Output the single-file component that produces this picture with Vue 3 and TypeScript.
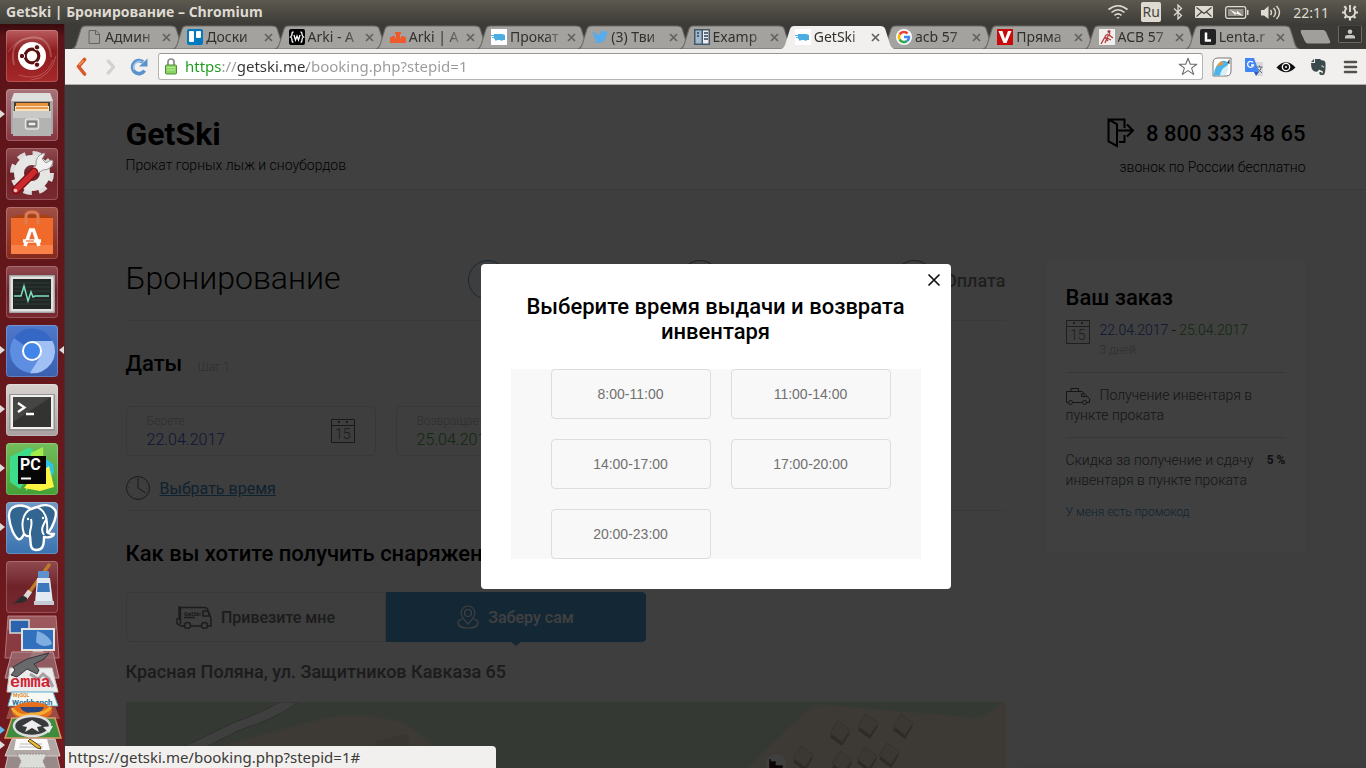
<script setup lang="ts">
import { ref } from 'vue'

interface Tab {
  icon: string
  title: string
}

const tabs: Tab[] = [
  { icon: 'file', title: 'Админ' },
  { icon: 'trello', title: 'Доски' },
  { icon: 'w', title: 'Arki - А' },
  { icon: 'blocks', title: 'Arki | А' },
  { icon: 'van', title: 'Прокат' },
  { icon: 'bird', title: '(3) Тви' },
  { icon: 'book', title: 'Examp' },
  { icon: 'van', title: 'GetSki' },
  { icon: 'google', title: 'acb 57' },
  { icon: 'v', title: 'Пряма' },
  { icon: 'ski', title: 'АСВ 57' },
  { icon: 'lenta', title: 'Lenta.r' },
]
const activeTab = ref(7)

interface LauncherItem {
  id: string
  label: string
  running?: boolean
  focused?: boolean
}

const launcher: LauncherItem[] = [
  { id: 'dash', label: 'Dash' },
  { id: 'files', label: 'Files', running: true },
  { id: 'settings', label: 'Settings' },
  { id: 'store', label: 'Software' },
  { id: 'monitor', label: 'Monitor' },
  { id: 'chromium', label: 'Chromium', running: true, focused: true },
  { id: 'terminal', label: 'Terminal', running: true },
  { id: 'pycharm', label: 'PyCharm', running: true },
  { id: 'pgadmin', label: 'pgAdmin', running: true },
  { id: 'paint', label: 'Paint' },
]

const url = ref('https://getski.me/booking.php?stepid=1')
const pickup = ref('22.04.2017')
const giveBack = ref('25.04.2017')
const slots: string[] = ['8:00-11:00', '11:00-14:00', '14:00-17:00', '17:00-20:00', '20:00-23:00']
const modalOpen = ref(true)

const houses: [number, number][] = [
  [715, 31], [743, 24], [778, 24], [678, 56], [717, 61], [742, 57], [764, 53],
]
</script>

<template>
  <div class="desktop">
    <header class="panel">
      <span class="panel-title">GetSki | Бронирование – Chromium</span>
      <div class="tray">
        <svg width="22" height="16" viewBox="0 0 22 16" fill="none" stroke="#dfdbd2" stroke-width="1.6">
          <path d="M1.5 5.5Q11-2 20.500 5.500M4.500 8.500Q11 3 17.500 8.500M7.500 11.300Q11 8.500 14.500 11.300" />
          <path d="M9.300 13.200h3.400L11 15z" fill="#dfdbd2" stroke="none" />
        </svg>
        <span class="lang">Ru</span>
        <svg width="10" height="16" viewBox="0 0 10 16" fill="none" stroke="#dfdbd2" stroke-width="1.3">
          <path d="M1 4.500l7.500 7L5 15V1l3.500 3.500L1 11.500" />
        </svg>
        <svg width="18" height="12" viewBox="0 0 18 12">
          <rect width="18" height="12" rx="1" fill="#dfdbd2" />
          <path d="M1.500 1.500L9 7.500l7.500-6M1.500 10.500L6.500 6M16.500 10.500L11.500 6" fill="none" stroke="#46443e" stroke-width="1.100" />
        </svg>
        <svg width="24" height="13" viewBox="0 0 24 13">
          <rect x=".7" y=".7" width="20" height="11.600" rx="2" fill="none" stroke="#dfdbd2" stroke-width="1.300" />
          <rect x="3" y="3" width="15.500" height="7" fill="#96938b" />
          <path d="M22 4v5h1.500V4z" fill="#dfdbd2" />
          <path d="M5 3.500l7 3.500V4.500l6 5.500-7.500-2.500v2z" fill="#f5f3ee" />
        </svg>
        <svg width="20" height="15" viewBox="0 0 20 15">
          <path d="M0 5h3l4.500-4v13L3 10.500H0z" fill="#dfdbd2" />
          <path d="M9.500 5q2 2.500 0 5M12.500 3q4 4.500 0 9M15.500 1q6 6.500 0 13" fill="none" stroke="#dfdbd2" stroke-width="1.400" />
        </svg>
        <span class="clock">22:11</span>
        <svg width="18" height="18" viewBox="0 0 18 18" fill="none" stroke="#dfdbd2" stroke-width="1.900">
          <path d="M5.800 5A5.200 5.200 0 1 0 12.200 5M9 2v7" />
          <path d="M3.300 3.300l1.800 1.800M14.700 3.300l-1.800 1.800M1 9.500h2.500M17 9.500h-2.500M3.500 15l1.800-1.800M14.500 15l-1.800-1.800M9 17.500V15" stroke-width="2.200" />
        </svg>
      </div>
    </header>

    <nav class="launcher">
      <div v-for="item in launcher" :key="item.id" class="slot" :class="{ running: item.running, focused: item.focused }">
        <button class="tile" :class="item.id" type="button" :aria-label="item.label">
          <svg v-if="item.id === 'dash'" viewBox="0 0 52 52">
            <g fill="none" stroke="#e8b8b8" stroke-opacity=".3" stroke-width="2">
              <path d="M8 35Q2 8 29 7q15 2 16 20" />
              <path d="M2 22Q14 4 36 9M13 45q25 8 34-15M25 50q20-2 25-24" stroke-width="1" />
            </g>
            <circle cx="26" cy="26" r="14" fill="#fff" />
            <circle cx="26" cy="26" r="6.800" fill="none" stroke="#5c1010" stroke-width="3.200" />
            <g fill="#5c1010" stroke="#fff" stroke-width="1">
              <circle cx="16" cy="26" r="2.700" /><circle cx="31" cy="17.300" r="2.700" /><circle cx="31" cy="34.700" r="2.700" />
            </g>
          </svg>
          <svg v-else-if="item.id === 'files'" viewBox="0 0 52 52">
            <path d="M8 4h36l3 8v33H5V12z" fill="#a9a9a7" />
            <path d="M8 4h36l3 8H5z" fill="#dededc" />
            <rect x="8" y="13" width="36" height="12" fill="#4b3d33" />
            <rect x="10" y="14" width="32" height="8" fill="#e8943c" />
            <rect x="9" y="17" width="34" height="7" fill="#f7e0b8" />
            <path d="M10 19h32" stroke="#e0852c" stroke-width="1.500" />
            <path d="M7 22h38v25H7z" fill="#b3b3b1" />
            <path d="M7 22h38v7H7z" fill="#c8c8c6" />
            <rect x="19.500" y="30" width="13" height="10" rx="2" fill="#a2a2a0" stroke="#e4e4e2" stroke-width="1.500" />
            <rect x="22" y="33" width="8" height="4" fill="#eee" stroke="#555" />
          </svg>
          <svg v-else-if="item.id === 'settings'" viewBox="0 0 52 52">
            <circle cx="26" cy="25" r="19" fill="none" stroke="#dcdcda" stroke-width="6" stroke-dasharray="8 6.920" />
            <circle cx="26" cy="25" r="13" fill="none" stroke="#e6e6e4" stroke-width="10" />
            <path d="M17 34L34 17" stroke="#fafafa" stroke-width="6" />
            <path d="M30 17q-1-9 8-12l1 1-3 5 4 4 5-3 2 1q-1 9-10 9l-5 3-4-4z" fill="#f1f1f0" stroke="#999" />
            <path d="M10 42L28 24" stroke="#7f0f12" stroke-width="8.500" stroke-linecap="round" />
            <path d="M10 42L28 24" stroke="#ca2a2d" stroke-width="6" stroke-linecap="round" />
            <circle cx="9.500" cy="42.500" r="1.800" fill="#f2c1bd" />
          </svg>
          <svg v-else-if="item.id === 'store'" viewBox="0 0 52 52">
            <path d="M5 11l5-3h32l5 3z" fill="#a84216" />
            <rect x="5" y="11" width="42" height="36" fill="#f06a2c" />
            <rect x="5" y="38" width="42" height="9" fill="#f88148" />
            <path d="M20 17V9q0-4 6-4t6 4v8" fill="none" stroke="#df7b50" stroke-width="3" />
            <path d="M19 39l5.500-16h3L33 39" fill="none" stroke="#fff" stroke-width="3.500" />
            <path d="M17 34h18" stroke="#fff" stroke-width="3.500" /><path d="M20 34h8" stroke="#f06a2c" stroke-width="1.200" />
          </svg>
          <svg v-else-if="item.id === 'monitor'" viewBox="0 0 52 52">
            <rect x="3" y="9" width="46" height="38" rx="1" fill="#a3a5a2" /><rect x="4.500" y="10.500" width="43" height="35" fill="#e2e3e1" />
            <rect x="7" y="13" width="38" height="30" fill="#202725" />
            <path d="M8 17h36M8 21h36M8 25h36M8 34h36M8 38h36" stroke="#38413e" stroke-width=".8" />
            <path d="M8 30h7l3-10 4 15 3-9 2 5 2-1h14" fill="none" stroke="#7de0bd" stroke-width="1.500" />
          </svg>
          <svg v-else-if="item.id === 'chromium'" viewBox="0 0 52 52">
            <circle cx="26" cy="26" r="22" fill="#5e8ee2" />
            <path d="M26 26L8 13A22 22 0 0 1 46 16z" fill="#3568c4" />
            <path d="M26 16h20.500A22 22 0 0 1 24 48l10-16z" fill="#a1c0f4" />
            <circle cx="26" cy="26" r="10" fill="#fff" /><circle cx="26" cy="26" r="8" fill="#4285e8" />
          </svg>
          <svg v-else-if="item.id === 'terminal'" viewBox="0 0 52 52">
            <rect x="3" y="10" width="46" height="37" rx="1" fill="#949492" /><rect x="4.500" y="11" width="43" height="34" fill="#efefed" />
            <rect x="7" y="13" width="38" height="30" fill="#333331" />
            <path d="M7 13h38L7 38z" fill="#454543" />
            <path d="M12 19l6.500 4.500L12 28M20 30h8" fill="none" stroke="#fff" stroke-width="2.300" />
          </svg>
          <svg v-else-if="item.id === 'pycharm'" viewBox="0 0 52 52">
            <path d="M4 14L24 4l10 12-20 30L4 39z" fill="#3ddc8a" />
            <path d="M37 4l-12 6-5 38 18-20z" fill="#a4ea48" />
            <path d="M38 15l9 6 1 8-7 14z" fill="#2cc4e8" />
            <path d="M18 45l8-10 17-12 5 21-14 4z" fill="#fbf542" />
            <rect x="12" y="13" width="28" height="28" fill="#060606" />
            <text x="14" y="27" fill="#fff" font-family="Roboto, sans-serif" font-weight="700" font-size="16">PC</text>
            <path d="M15 35.500h10" stroke="#fff" stroke-width="2" />
          </svg>
          <svg v-else-if="item.id === 'pgadmin'" viewBox="0 0 52 52">
            <path d="M25 7C14 0 2 4 3 15c1 10 5 19 9 22 3 2 6-5 6-5s3 3 6 2c1 5-1 14 6 14 6 0 8-3 8-13 4 1 9 0 10-3-3 0-5 0-6-1 5-6 10-19 7-23C44 1 35 3 31 5z" fill="#326690" stroke="#fff" stroke-width="2.400" stroke-linejoin="round" />
            <path d="M25 7c-9 4-10 16-7 25M31 5c10 4 11 15 10 26M24 34c-1-7 3-9 1-17M38 33c-4-5-1-10 3-17" fill="none" stroke="#fff" stroke-width="2" />
            <circle cx="22" cy="17" r="1.200" fill="#fff" /><circle cx="37" cy="16" r="1.200" fill="#fff" />
          </svg>
          <svg v-else viewBox="0 0 52 52">
            <path d="M43 4L22 33" stroke="#c07a28" stroke-width="3.500" stroke-linecap="round" />
            <path d="M24 30l-5 7" stroke="#d9d9d9" stroke-width="5" />
            <path d="M4 42q7 0 9-5 4-4 8 0 1 6-17 5z" fill="#2c2c2c" />
            <rect x="32" y="10" width="11" height="7" rx="1" fill="#5e92cf" />
            <path d="M31 17h13l3 25H29z" fill="#e3e9f0" />
            <path d="M32 22h11l1 9H31z" fill="#3d78bf" />
            <rect x="28" y="40" width="20" height="4" fill="#c6ccd4" />
          </svg>
        </button>
      </div>
      <svg class="stack" width="65" height="155" viewBox="0 0 65 155">
        <path d="M8 2h48l3 42H5z" fill="#8a3b41" stroke="#b07478" stroke-width="1" />
        <path d="M8 2h48l1 14H7z" fill="#fff" fill-opacity=".15" />
        <rect x="10" y="6" width="19" height="13" fill="#2b63ae" stroke="#d6d8d4" stroke-width="1.500" />
        <rect x="22" y="15" width="32" height="21" fill="#3170bd" stroke="#e3e4e0" stroke-width="2" />
        <path d="M37 17c8 2 14 8 15 13q-9 5-16-2z" fill="#7faee0" />
        <path d="M33 37h10l3 6H30z" fill="#d0d2ce" />
        <path d="M12 38h41l6 26H5z" fill="#98696d" fill-opacity=".85" stroke="#bd9194" />
        <path d="M10 54h42l6 24H7z" fill="#ececec" stroke="#c9c9c9" />
        <path d="M13 53l14-8 22-6-5 6-10 5 5 6-2 4-10-5-10 8-6-2 4-5z" fill="#68696b" stroke="#34353a" />
        <path d="M30 60l8 5 5-5 6 5 4 8" fill="none" stroke="#a3a3a3" stroke-width="3" />
        <text x="10" y="73" fill="#cf2233" font-family="Liberation Mono, monospace" font-weight="700" font-size="17">emma</text>
        <path d="M12 78h41l5 14H8z" fill="#f7f7f4" stroke="#63b6da" />
        <text x="13" y="83" fill="#dd8b2b" font-family="Roboto, sans-serif" font-weight="700" font-size="5">MySQL</text>
        <text x="12" y="91" fill="#186f9b" font-family="Roboto, sans-serif" font-weight="700" font-size="8">Workbench</text>
        <path d="M10 92h45l5 13H6z" fill="#9a4c42" />
        <ellipse cx="32" cy="97" rx="20" ry="9" fill="#e56f1d" />
        <path d="M20 93h24q-2 6-12 6-9 0-12-6z" fill="#284780" />
        <path d="M12 94q7 11 19 6 14 1 20-7" fill="none" stroke="#f5ad31" stroke-width="3" />
        <path d="M12 104h43l6 20H5z" fill="#3b8c3e" stroke="#e29b62" stroke-width="1.500" />
        <ellipse cx="32" cy="112" rx="18" ry="10" fill="#383b3b" stroke="#ddd" stroke-width="2.500" />
        <path d="M22 112l10-6 10 6-5 1 2 5-7-4-7 4 2-5zM43 113l10-1-4 7z" fill="#eee" />
        <path d="M12 125h43l5 17H5z" fill="#b1a8a6" stroke="#d5cdca" />
        <path d="M16 125h31l3 11H14z" fill="#fafafa" />
        <path d="M20 130h22M19 133h24" stroke="#bbb" />
        <path d="M30 125l10 7 1 3-4-1-9-7z" fill="#e7b934" stroke="#5c4a20" />
        <path d="M8 142h49l3 13H5z" fill="#988a88" stroke="#cbbfbc" />
        <path d="M17 140h30l-4 7 3 7H18l3-7z" fill="#dcdcd9" stroke="#8f8f8d" stroke-dasharray="2 1" />
        <path d="M0 112l5 4-5 4z" fill="#5cb8e6" /><path d="M0 127l5 4-5 4z" fill="#ddd" />
      </svg>
    </nav>

    <main class="browser">
      <div class="tabstrip">
        <div v-for="(tab, i) in tabs" :key="i" class="tab" :class="{ active: i === activeTab }">
          <svg class="tab-shape" viewBox="0 0 113 24" preserveAspectRatio="none">
            <path d="M0 24Q3 23 4 20L9 4Q10 1 13 1H99Q103 1 104 4L109 20Q110 23 113 24z" />
          </svg>
          <button class="tab-main" type="button" @click="activeTab = i">
            <svg width="16" height="16" viewBox="0 0 16 16">
              <path v-if="tab.icon === 'file'" d="M3 1.500h7l3.500 3.500v9.500H3zM9.500 1.500V5.500h4" fill="none" stroke="#66635f" />
              <g v-else-if="tab.icon === 'trello'">
                <rect width="16" height="16" rx="2" fill="#0079bf" /><rect x="2" y="2" width="5" height="11" rx="1" fill="#fff" /><rect x="9" y="2" width="5" height="7" rx="1" fill="#fff" />
              </g>
              <g v-else-if="tab.icon === 'w'">
                <rect width="16" height="16" rx="2" fill="#000" />
                <path d="M4.500 3Q3 3 3 5t-1.500 3Q3 8.500 3 11t1.500 2M11.500 3Q13 3 13 5t1.500 3Q13 8.500 13 11t-1.500 2M5 6l1.500 5L8 7l1.500 4L11 6" fill="none" stroke="#fff" stroke-width="1.300" />
              </g>
              <path v-else-if="tab.icon === 'blocks'" d="M0 14V8h2V7h3v2h1V5H5V3h6v2h-1v4h1V7h3v1h2v6z" fill="#ed5b2d" />
              <g v-else-if="tab.icon === 'van'">
                <rect width="16" height="16" fill="#fff" />
                <path d="M3 5h8l3 1v5h-2l-1 1-2-1H6l-1 1-1-1-1-2H1V8h2V7H0V6h3z" fill="#4aace0" />
              </g>
              <path v-else-if="tab.icon === 'bird'" d="M1 2q3 4 7 3.700Q8 1 12 2l1.500.700L15.500 2l-1 2 1.500-.3-1.500 1.800C14 12 9 15.500 1 13.500q3 0 4.500-1.500-2.500-.5-3-2.500H4Q1 8 1 5.500l1.500.5Q0 4 1 2z" fill="#55acee" />
              <g v-else-if="tab.icon === 'book'">
                <rect width="16" height="16" fill="#43586c" /><rect x="1.500" y="1.500" width="6" height="13" fill="#a2b9cc" /><rect x="9" y="1.500" width="5.500" height="13" fill="#eee" />
                <path d="M10 4h4M10 7h4M10 10h4M3 4h2M3 7h2" stroke="#2f4254" stroke-width="1.500" />
              </g>
              <g v-else-if="tab.icon === 'google'" fill="none" stroke-width="2.600">
                <circle cx="8" cy="8" r="8" fill="#fff" stroke="none" />
                <path d="M3.600 5.500A5 5 0 0 1 11.500 4.500" stroke="#ea4335" /><path d="M3.600 5.500a5 5 0 0 0 0 5" stroke="#fbbc05" />
                <path d="M3.600 10.500a5 5 0 0 0 7.500 1.500" stroke="#34a853" /><path d="M11.100 12A5 5 0 0 0 13 8H8" stroke="#4285f4" />
              </g>
              <g v-else-if="tab.icon === 'v'">
                <rect width="16" height="16" fill="#c80a0a" /><path d="M1.500 2h4l2.500 8 3-8h3.500L9.500 14h-3z" fill="#fff" />
              </g>
              <g v-else-if="tab.icon === 'ski'">
                <rect width="16" height="16" fill="#f1eeee" />
                <circle cx="10" cy="2.500" r="1.500" fill="#a83a3c" /><path d="M11 4L8 9l4 2M10 6l4 3M8 9l-2 5M9 5L6 7M2 15l4-7 3 4" fill="none" stroke="#b3393b" stroke-width="1.300" />
              </g>
              <g v-else>
                <rect width="16" height="16" rx="2" fill="#222" /><path d="M6 3.500v8h5" fill="none" stroke="#fff" stroke-width="2.500" />
              </g>
            </svg>
            <span class="tab-title">{{ tab.title }}</span>
          </button>
          <button class="tab-close" type="button" aria-label="Закрыть вкладку">
            <svg width="9" height="9" viewBox="0 0 9 9"><path d="M1 1l7 7M8 1L1 8" stroke="#66605c" stroke-width="1.700" /></svg>
          </button>
        </div>
        <button class="new-tab" type="button" aria-label="Новая вкладка">
          <svg width="32" height="16" viewBox="0 0 32 16"><path d="M3 1h21q2 0 3 2l4 9q1 2.500-2 2.500H9q-2 0-3-2L2 4Q1 1 3 1z" fill="#a09f9c" /></svg>
        </button>
        <button class="profile" type="button" aria-label="Профиль">
          <svg width="10" height="10" viewBox="0 0 10 10" fill="#c8c6c1"><circle cx="5" cy="2.700" r="2.300" /><path d="M0 9.500V8q0-2 3-2h4q3 0 3 2v1.500z" /></svg>
        </button>
      </div>

      <div class="toolbar">
        <button type="button" aria-label="Назад"><svg width="16" height="20" viewBox="0 0 16 20"><path d="M11.500 2.500L5.500 9.500l6 7.500" fill="none" stroke="#d9592a" stroke-width="3.600" stroke-linejoin="round" stroke-linecap="round" /><path d="M10.500 3.500L6 8" stroke="#f09b58" stroke-width="1.500" /></svg></button>
        <button type="button" aria-label="Вперёд"><svg width="22" height="20" viewBox="0 0 22 20"><path d="M9.500 3l6 7-6 7" fill="none" stroke="#d3d1ce" stroke-width="3.400" stroke-linejoin="round" /></svg></button>
        <button type="button" aria-label="Обновить"><svg width="20" height="20" viewBox="0 0 20 20"><path d="M15.500 13.500A6.500 6.500 0 1 1 14 5" fill="none" stroke="#5b92cb" stroke-width="3.600" /><path d="M18.500 1.500v8H10z" fill="#5b92cb" /><path d="M5 13A6.500 6.500 0 0 1 13 4.500" fill="none" stroke="#a5c9ea" stroke-width="1.300" /></svg></button>
        <div class="omnibox">
          <svg width="12" height="17" viewBox="0 0 12 17">
            <path d="M3 8V4q0-3 3-3t3 3v4" fill="none" stroke="#8a8a8a" stroke-width="1.700" />
            <rect x=".5" y="7" width="11" height="9" rx="1" fill="#8cd464" stroke="#4e8c36" />
            <path d="M2 9.500h8M2 12h8" stroke="#b6ec95" />
          </svg>
          <input v-model="url" class="url" type="text" aria-label="Адрес" />
          <svg width="20" height="19" viewBox="0 0 20 19"><path d="M10 1.200l2.300 6h6.400l-5.100 3.900 2 6.300L10 13.600l-5.600 3.800 2-6.300L1.300 7.200h6.400z" fill="#fff" stroke="#6b6b6b" stroke-width="1.100" stroke-linejoin="round" /></svg>
        </div>
        <div class="exts">
          <button type="button" aria-label="Kingfisher"><svg width="20" height="20" viewBox="0 0 20 20">
            <path d="M6 1h13v13q0 5-5 5H1V6q0-5 5-5z" fill="#fff" stroke="#777" />
            <path d="M1.500 18.500Q3 7 10 4q5-1 6 3 0 8-5 11.500z" fill="#4bb4e8" /><path d="M8 18.500Q9 12 13 10l3-2q1 7-4 10.500z" fill="#d8eefa" /><path d="M4 10l5-6 3 3z" fill="#e9953a" /><path d="M15 6l2.500-4v5z" fill="#333" />
          </svg></button>
          <button type="button" aria-label="Translate"><svg width="20" height="20" viewBox="0 0 20 20">
            <path d="M9 5h10v14h-7z" fill="#d9d9d9" /><path d="M1 1h9l5 14H2q-1 0-1-1z" fill="#4285f4" /><path d="M10 15h5l-3 4z" fill="#2a56c6" />
            <path d="M9 5.500A3 3 0 1 0 9.500 8H7" fill="none" stroke="#fff" stroke-width="1.300" /><path d="M12.500 10h6M15.500 8.500V10M17.500 10q-1 4-4 5.500M14 12l4 4" fill="none" stroke="#607080" />
          </svg></button>
          <button type="button" aria-label="Eye"><svg width="20" height="20" viewBox="0 0 20 20"><path d="M.5 10.500Q10 0 19.500 10.500 10 20 .5 10.500z" fill="#111" /><circle cx="10" cy="10" r="4.300" fill="#fff" /><circle cx="10" cy="10" r="3" fill="#111" /><circle cx="10" cy="10" r="1" fill="#fff" /></svg></button>
          <button type="button" aria-label="Evernote"><svg width="20" height="20" viewBox="0 0 20 20"><path d="M3 6h4V2h5q1 1.500 3.500 1.500Q18 4 17.500 9q0 8-2 9h-3q-2-1-1-3h2v1.500q2-.5 1-2.500-3-1-3.500-1.500-1 3-4 2Q3 14 3 6zM3 5l3-3v3z" fill="#3b4a4c" /><path d="M13.500 9q2-.5 2 1.500" fill="none" stroke="#f1f0ee" /></svg></button>
          <button type="button" aria-label="Меню"><svg width="20" height="20" viewBox="0 0 20 20"><path d="M5 5h11M5 10h11M5 15h11" stroke="#55524d" stroke-width="2.600" stroke-linecap="round" /></svg></button>
        </div>
      </div>

      <div class="viewport">
        <div class="site">
          <div class="site-head">
            <div class="wrap head-row">
              <div>
                <div class="logo">GetSki</div>
                <div class="tagline">Прокат горных лыж и сноубордов</div>
              </div>
              <div class="contact">
                <div class="phone">
                  <svg width="28" height="30" viewBox="0 0 28 30" fill="none" stroke="#000" stroke-width="2"><path d="M1.500 1.500v22L10 28V6zM1.500 1.500h16V10M17.500 17v7H12M11 12.500h15M20 6.500l6 6-6 6" /></svg>
                  <span>8 800 333 48 65</span>
                </div>
                <div class="tagline">звонок по России бесплатно</div>
              </div>
            </div>
          </div>

          <div class="wrap columns">
            <section class="booking">
              <div class="title-row">
                <h1>Бронирование</h1>
                <div class="steps">
                  <span class="circle current"></span>
                  <span class="circle"></span>
                  <span class="last-step"><span class="circle"></span>Оплата</span>
                </div>
              </div>

              <div class="dates">
                <h2>Даты <small>Шаг 1</small></h2>
                <div class="fields">
                  <div class="field">
                    <div class="field-text">
                      <label for="pickup">Берете</label>
                      <input id="pickup" v-model="pickup" class="blue" type="text" />
                    </div>
                    <svg width="24" height="24" viewBox="0 0 24 24"><path d="M.5.5h23v23H.5zM.5 6.500h23" fill="none" stroke="#666" /><path d="M7 3h2M15 3h2" stroke="#666" stroke-width="2" /><text x="4" y="20" font-family="Roboto, sans-serif" font-weight="300" font-size="14" fill="#666">15</text></svg>
                  </div>
                  <div class="field">
                    <div class="field-text">
                      <label for="back">Возвращаете</label>
                      <input id="back" v-model="giveBack" class="green" type="text" />
                    </div>
                  </div>
                </div>
                <div class="time-row">
                  <svg width="24" height="24" viewBox="0 0 24 24" fill="none" stroke="#666"><circle cx="12" cy="12" r="11.500" /><path d="M12 2v10l7 4.500" /><circle cx="12" cy="12" r="9" stroke-dasharray="1 3.712" stroke-opacity=".6" /></svg>
                  <a href="#">Выбрать время</a>
                </div>
              </div>

              <h2 class="how">Как вы хотите получить снаряжение?</h2>
              <div class="choice">
                <button type="button">
                  <svg width="36" height="24" viewBox="0 0 36 24" fill="none" stroke="#707070" stroke-width="1.500">
                    <path d="M4.500 19V2.500h24q3 0 4 4l2.500 7V21h-3M25 21H15M8 21H5l-4-2.500V13M3 1v14M27 6h5l1.500 5H27zM8 12.500h11" />
                    <circle cx="11.500" cy="20.500" r="3" /><circle cx="28.500" cy="20.500" r="3" />
                    <text x="8" y="10.500" fill="#606060" stroke="none" font-family="Roboto, sans-serif" font-weight="700" font-size="5">GettSki</text>
                  </svg>
                  Привезите мне
                </button>
                <button type="button" class="selected">
                  <svg width="22" height="24" viewBox="0 0 22 24" fill="none" stroke="#fff" stroke-width="1.200"><path d="M11 19Q4 12 4 8a7 7 0 0 1 14 0q0 4-7 11z" /><circle cx="11" cy="8" r="3.500" /><path d="M5.500 14Q1 15 1 18.500 2 23 11 23t10-4.500Q21 15 16.500 14" /></svg>
                  Заберу сам
                </button>
              </div>
              <p class="address">Красная Поляна, ул. Защитников Кавказа 65</p>
              <svg class="map" viewBox="0 0 880 120" preserveAspectRatio="xMinYMin slice">
                <rect width="880" height="120" fill="#d0e4cc" />
                <path d="M0 68L61 43 107 21Q135 11 154 0h18Q150 17 114 28L84 43 20 70z" fill="#fcfcfc" stroke="#b4bfb1" />
                <path d="M40 62L101 42 150 29 200 16q28-6 57 0l22 5 28 22 40 40v40H40z" fill="#f1e4d4" />
                <path d="M249 39l32-7 3 12-34 4z" fill="#e4d6c6" />
                <path d="M610 120V78L683 6q8-5 16-3l152 13q12-4 17-9l8-7h4v120z" fill="#f1e6d6" />
                <g v-for="(h, i) in houses" :key="i">
                  <path :d="`M${h[0] - 3} ${h[1] - 8}l12 8-8 13-12-9z`" fill="#b8aa98" />
                  <path :d="`M${h[0] - 3} ${h[1] - 12}l12 9-8 12-12-9z`" fill="#ecdfcc" stroke="#d0c1ad" />
                </g>
                <circle cx="650" cy="62" r="10" fill="#fff" /><path d="M644 57v12M645 60h4v4h7v4h-12z" fill="#3c1c1c" stroke="#3c1c1c" stroke-width="1.500" />
              </svg>
            </section>

            <aside class="order">
              <h2>Ваш заказ</h2>
              <div class="order-dates">
                <svg width="24" height="24" viewBox="0 0 24 24"><path d="M.5.5h23v23H.5zM.5 6.500h23" fill="none" stroke="#777" /><path d="M7 3h2M15 3h2" stroke="#777" stroke-width="2" /><text x="4" y="20" font-family="Roboto, sans-serif" font-weight="300" font-size="14" fill="#777">15</text></svg>
                <div>
                  <div class="range"><span class="blue">22.04.2017</span> - <span class="green">25.04.2017</span></div>
                  <div class="days">3 дней</div>
                </div>
              </div>
              <p class="line-item">
                <svg width="24" height="17" viewBox="0 0 24 17" fill="none" stroke="#555"><path d="M2 14.500H.5v-11H16l7.500 7v4H20M16.500 14.500H7M5 3.500v-3h7.500v3M15.500 6v2.500H21M15.500 6h3" /><circle cx="4.500" cy="14.500" r="2" /><circle cx="18.500" cy="14.500" r="2" /></svg>Получение инвентаря в пункте проката
              </p>
              <div class="line-item discount">
                <span>Скидка за получение и сдачу инвентаря в пункте проката</span>
                <b>5 %</b>
              </div>
              <a class="promo" href="#">У меня есть промокод</a>
            </aside>
          </div>
        </div>

        <div v-if="modalOpen" class="shade">
          <div class="modal" role="dialog" aria-labelledby="modal-title">
            <button class="modal-close" type="button" aria-label="Закрыть" @click="modalOpen = false">
              <svg width="14" height="14" viewBox="0 0 14 14"><path d="M1.500 1.500l11 11M12.500 1.500l-11 11" stroke="#111" stroke-width="1.700" /></svg>
            </button>
            <h2 id="modal-title">Выберите время выдачи и возврата инвентаря</h2>
            <div class="slots">
              <button v-for="s in slots" :key="s" type="button">{{ s }}</button>
            </div>
          </div>
        </div>
        <div class="status">https://getski.me/booking.php?stepid=1#</div>
      </div>
    </main>
  </div>
</template>

<style>
html,
body {
  height: 100%;
  margin: 0;
  overflow: hidden;
}
</style>

<style scoped>
* {
  box-sizing: border-box;
}
button {
  padding: 0;
  border: 0;
  background: none;
  font: inherit;
  color: inherit;
}
input {
  padding: 0;
  border: 0;
  background: none;
  outline: none;
}
svg {
  display: block;
  flex: none;
}
h1,
h2,
p {
  margin: 0;
}
.desktop {
  display: grid;
  grid-template: 24px minmax(0, 1fr) / 65px minmax(0, 1fr);
  height: 100vh;
  overflow: hidden;
  background: #3c3b37;
  font-family: "Noto Sans", "Open Sans", sans-serif;
}
.panel {
  grid-column: 1 / -1;
  display: flex;
  align-items: center;
  justify-content: space-between;
  padding: 0 7px 0 6px;
  background: linear-gradient(#5c594f, #3d3c38);
  color: #dfdbd2;
}
.panel-title {
  font: 700 14px/24px "Open Sans", sans-serif;
}
.tray {
  display: flex;
  align-items: center;
  gap: 12px;
}
.lang {
  width: 20px;
  border-radius: 2px;
  background: #dfdbd2;
  color: #46443e;
  font-size: 14px;
  line-height: 20px;
  text-align: center;
}
.clock {
  font-size: 14px;
}
.launcher {
  display: flex;
  flex-direction: column;
  gap: 7px;
  padding-top: 6px;
  overflow: hidden;
  border-right: 1px solid #4a2c30;
  background: linear-gradient(#380b0e, #5c1418 14px, #66181c 50%, #71191e);
}
.slot {
  position: relative;
  flex: none;
  padding-left: 6px;
}
.running::before,
.focused::after {
  content: "";
  position: absolute;
  top: 21px;
  border: 4px solid transparent;
}
.running::before {
  left: 0;
  border-left: 5px solid #dedcda;
  border-right: 0;
}
.focused::after {
  right: 0;
  border-right: 5px solid #dedcda;
  border-left: 0;
}
.tile {
  display: block;
  width: 52px;
  height: 52px;
  border-radius: 4px;
  background: linear-gradient(#8f4a50, #6f2329 50%, #7a2a30);
  box-shadow: inset 0 0 0 1px rgba(255, 255, 255, 0.2);
}
.tile.dash {
  background: linear-gradient(#b95c5e, #8d1b1d 40%, #a8292a);
}
.tile.files {
  background: linear-gradient(#a97378, #86343f);
}
.tile.store {
  background: linear-gradient(#a05045, #84281c);
}
.tile.chromium {
  background: linear-gradient(#4e78cb, #3a5fae);
}
.tile.terminal {
  background: linear-gradient(#d8d2cf, #a9a1a0);
}
.tile.pycharm {
  background: linear-gradient(#74bd5c, #44a136);
}
.tile.pgadmin {
  background: linear-gradient(#7299c4, #3a73b0);
}
.stack {
  margin-top: -6px;
}
.browser {
  display: flex;
  flex-direction: column;
  min-width: 0;
  min-height: 0;
}
.tabstrip {
  display: flex;
  align-items: flex-end;
  flex: none;
  height: 25px;
  padding: 0 4px 0 7px;
  background: #3c3b37;
}
.tab {
  position: relative;
  display: flex;
  align-items: center;
  flex: 1;
  min-width: 0;
  height: 24px;
  padding: 0 14px;
}
.tab + .tab {
  margin-left: -12px;
}
.tab.active {
  z-index: 1;
}
.tab-shape {
  position: absolute;
  inset: 0;
  width: 100%;
  height: 100%;
  fill: #a3a29f;
  stroke: #6c6a66;
  stroke-width: 1;
}
.active .tab-shape {
  fill: #f1f0ee;
  stroke: none;
}
.tab-main {
  position: relative;
  display: flex;
  align-items: center;
  flex: 1;
  gap: 3px;
  min-width: 0;
  color: #33302c;
}
.tab-title {
  flex: 1;
  min-width: 0;
  overflow: hidden;
  font-size: 14px;
  line-height: 20px;
  text-align: left;
  white-space: nowrap;
  mask-image: linear-gradient(90deg, #000 70%, rgba(0, 0, 0, 0.3));
}
.tab-close {
  position: relative;
  margin-left: 6px;
}
.new-tab {
  align-self: center;
}
.profile {
  display: grid;
  place-items: center;
  align-self: flex-start;
  width: 24px;
  height: 18px;
  margin: 1px 0 0 7px;
  border: 1px solid #6a6862;
  border-top-color: #45433f;
  border-radius: 2px;
  background: #33322f;
}
.toolbar {
  display: flex;
  align-items: center;
  flex: none;
  gap: 9px;
  height: 36px;
  padding: 0 6px 0 8px;
  border-bottom: 1px solid #b0aeab;
  background: #f1f0ee;
}
.omnibox {
  display: flex;
  align-items: center;
  flex: 1;
  gap: 8px;
  min-width: 0;
  height: 27px;
  padding: 0 4px 0 6px;
  border: 1px solid #b5b3b0;
  border-top-color: #999794;
  border-radius: 3px;
  background: #fff;
}
.url {
  flex: 1;
  min-width: 0;
  height: 25px;
  padding-bottom: 2px;
  background: linear-gradient(90deg, #1a9a1a 37px, #999 37px 52px, #333 52px 122px, #999 122px);
  background-clip: text;
  color: transparent;
  font: 400 15px/22px "Noto Sans", sans-serif;
}
.exts {
  display: flex;
  gap: 12px;
}
.viewport {
  position: relative;
  flex: 1;
  min-height: 0;
  overflow: hidden;
}
.site {
  height: 100%;
  overflow: hidden;
  background: #f5f5f5;
  color: #000;
  font-family: Roboto, sans-serif;
  font-weight: 300;
}
.wrap {
  max-width: 1180px;
  margin: 0 auto;
}
.site-head {
  padding: 30px 0 10px;
  border-bottom: 1px solid #e6e6e6;
  background: #fff;
}
.head-row {
  display: flex;
  justify-content: space-between;
}
.logo {
  font-size: 32px;
  font-weight: 700;
  line-height: 38px;
}
.tagline {
  font-size: 14px;
  line-height: 24px;
}
.contact {
  display: flex;
  flex-direction: column;
  align-items: flex-end;
}
.phone {
  display: flex;
  align-items: center;
  gap: 11px;
  height: 40px;
  padding-bottom: 4px;
  font-size: 22px;
  font-weight: 500;
}
.columns {
  display: flex;
  align-items: flex-start;
  gap: 40px;
  padding-top: 70px;
}
.booking {
  flex: 1;
  min-width: 0;
}
.title-row {
  display: flex;
  align-items: flex-start;
  justify-content: space-between;
  height: 61px;
  border-bottom: 1px solid #e2e2e2;
}
h1 {
  font-size: 32px;
  font-weight: 300;
  line-height: 36px;
}
.steps {
  display: grid;
  grid-template-columns: 212px 214px auto;
}
.circle {
  width: 40px;
  height: 40px;
  border: 1px solid #777;
  border-radius: 50%;
}
.circle.current {
  border-color: #4d9cd3;
}
.last-step {
  display: flex;
  align-items: center;
  gap: 10px;
  color: #7c7c7c;
  font-size: 18px;
  font-weight: 500;
}
h2 {
  font-size: 22px;
  font-weight: 500;
  line-height: 26px;
}
h2 small {
  margin-left: 10px;
  color: #bbb;
  font-size: 12px;
  font-weight: 300;
}
.dates {
  padding: 30px 0 10px;
  border-bottom: 1px solid #e2e2e2;
}
.fields {
  display: flex;
  gap: 20px;
  margin-top: 26px;
}
.field {
  display: flex;
  align-items: center;
  justify-content: space-between;
  width: 250px;
  height: 50px;
  padding: 0 20px;
  border: 1px solid #e0e0e0;
  border-radius: 4px;
}
.field-text {
  display: flex;
  flex-direction: column;
  min-width: 0;
}
label {
  color: #bbb;
  font-size: 12px;
  line-height: 18px;
}
.field input {
  width: 120px;
  font: 300 16px/20px Roboto, sans-serif;
}
.blue {
  color: #3a55d0;
}
.green {
  color: #49a040;
}
.time-row {
  display: flex;
  align-items: center;
  gap: 10px;
  margin-top: 20px;
}
.time-row a {
  color: #3b87bd;
  font-size: 16px;
  font-weight: 400;
}
.how {
  margin: 30px 0 25px;
}
.choice {
  display: flex;
}
.choice button {
  position: relative;
  display: flex;
  align-items: center;
  justify-content: center;
  gap: 9px;
  width: 260px;
  height: 50px;
  border: 1px solid #e0e0e0;
  border-radius: 4px 0 0 4px;
  color: #707070;
  font-size: 16px;
  font-weight: 500;
}
.choice .selected {
  border-color: #509cd4;
  border-radius: 0 4px 4px 0;
  background: #509cd4;
  color: #fff;
}
.selected::after {
  content: "";
  position: absolute;
  top: 48px;
  border: 6px solid transparent;
  border-top: 5px solid #509cd4;
  border-bottom: 0;
}
.address {
  margin: 20px 0;
  color: #707070;
  font-size: 18px;
  font-weight: 500;
  line-height: 20px;
}
.map {
  width: 100%;
  height: 120px;
}
.order {
  width: 260px;
  min-height: 293px;
  padding: 25px 20px;
  border-radius: 3px;
  background: #fdfdfd;
}
.order-dates {
  display: flex;
  gap: 10px;
  margin-top: 9px;
  padding-bottom: 12px;
}
.range {
  font-size: 14px;
  line-height: 20px;
}
.days {
  color: #bbb;
  font-size: 12px;
  line-height: 20px;
}
.line-item {
  padding: 12px 0;
  border-top: 1px solid #ddd;
  color: #555;
  font-size: 14px;
  line-height: 20px;
}
.line-item svg {
  display: inline-block;
  margin-right: 10px;
  vertical-align: -5px;
}
.discount {
  display: flex;
  justify-content: space-between;
}
.discount b {
  flex: none;
  color: #444;
  font-size: 12px;
  font-weight: 700;
}
.promo {
  display: block;
  color: #3b8fcc;
  font-size: 12px;
  line-height: 20px;
  text-decoration: none;
}
.shade {
  position: absolute;
  inset: 0;
  display: flex;
  align-items: center;
  justify-content: center;
  background: rgba(0, 0, 0, 0.75);
}
.modal {
  position: relative;
  width: 470px;
  padding: 30px;
  border-radius: 4px;
  background: #fff;
  font-family: Roboto, sans-serif;
}
.modal h2 {
  margin-bottom: 25px;
  line-height: 25px;
  text-align: center;
}
.modal-close {
  position: absolute;
  top: 9px;
  right: 10px;
}
.slots {
  display: grid;
  grid-template-columns: repeat(2, 160px);
  gap: 20px;
  padding: 0 40px;
  background: #f8f8f8;
}
.slots button {
  height: 50px;
  border: 1px solid #ddd;
  border-radius: 4px;
  color: #707070;
  font: 400 14px/20px "Liberation Sans", Arial, sans-serif;
}
.status {
  position: absolute;
  bottom: 0;
  left: 0;
  width: 431px;
  padding-left: 3px;
  border-radius: 0 4px 0 0;
  background: #f1f0ee;
  color: #3c3b37;
  font-size: 15px;
  line-height: 22px;
}
</style>
